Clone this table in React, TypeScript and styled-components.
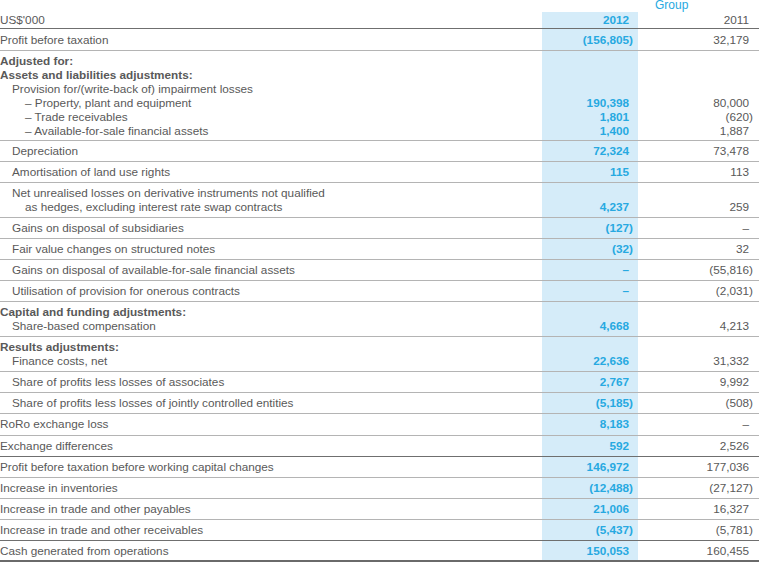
import React from "react";
import styled, { createGlobalStyle } from "styled-components";

const GlobalStyle = createGlobalStyle`
  html, body { margin: 0; padding: 0; background: #ffffff; }
  body { font-family: "Liberation Sans", Arial, sans-serif; }
`;

const COLS = "542px 96px 121px";
const BLUE = "#27a9e1";
const BLUE_BG = "#d5ecf9";
const TEXT = "#595959";

type Border = "none" | "dark" | "gray" | "thick";

const Sheet = styled.div`
  width: 759px;
  font-size: 11.75px;
  line-height: 14px;
  color: ${TEXT};
`;

const GroupRow = styled.div`
  display: grid;
  grid-template-columns: ${COLS};
  height: 12px;
`;

const GroupLabel = styled.div`
  grid-column: 3;
  padding-left: 17px;
  line-height: 11px;
  font-size: 12px;
  color: ${BLUE};
`;

const Row = styled.div<{ $border: Border; $pt: number; $pb: number }>`
  display: grid;
  grid-template-columns: ${COLS};
  border-bottom: ${(p) =>
    p.$border === "dark"
      ? "1px solid #6f6f6f"
      : p.$border === "thick"
      ? "2px solid #6a6a6a"
      : p.$border === "gray"
      ? "1px solid #b4b4b4"
      : "none"};
  & > * {
    padding-top: ${(p) => p.$pt}px;
    padding-bottom: ${(p) => p.$pb}px;
  }
`;

const LabelCell = styled.div`
  display: flex;
  flex-direction: column;
`;

const LabelLine = styled.div<{ $level: number; $bold?: boolean }>`
  padding-left: ${(p) => (p.$level === 2 ? 25 : p.$level === 1 ? 12 : 0)}px;
  font-weight: ${(p) => (p.$bold ? 700 : 400)};
  white-space: nowrap;
`;

const ValueCell = styled.div<{ $current?: boolean }>`
  display: flex;
  flex-direction: column;
  justify-content: flex-end;
  align-items: flex-end;
  background: ${(p) => (p.$current ? BLUE_BG : "transparent")};
  color: ${(p) => (p.$current ? BLUE : TEXT)};
  font-weight: ${(p) => (p.$current ? 700 : 400)};
  padding-right: ${(p) => (p.$current ? 5 : 6)}px;
`;

const Amount = styled.div`
  white-space: nowrap;
`;

const Paren = styled.span<{ $hidden: boolean }>`
  visibility: ${(p) => (p.$hidden ? "hidden" : "visible")};
`;

type Line = { t: string; l?: number; b?: boolean };
type RowData = {
  lines: Line[];
  v12: string[];
  v11: string[];
  border?: Border;
  pt?: number;
  pb?: number;
};

const rows: RowData[] = [
  { lines: [{ t: "Profit before taxation" }], v12: ["(156,805)"], v11: ["32,179"], pt: 4, pb: 3 },
  {
    lines: [
      { t: "Adjusted for:", b: true },
      { t: "Assets and liabilities adjustments:", b: true },
      { t: "Provision for/(write-back of) impairment losses", l: 1 },
      { t: "– Property, plant and equipment", l: 2 },
      { t: "– Trade receivables", l: 2 },
      { t: "– Available-for-sale financial assets", l: 2 },
    ],
    v12: ["190,398", "1,801", "1,400"],
    v11: ["80,000", "(620)", "1,887"],
    pt: 3,
    pb: 2,
  },
  { lines: [{ t: "Depreciation", l: 1 }], v12: ["72,324"], v11: ["73,478"] },
  { lines: [{ t: "Amortisation of land use rights", l: 1 }], v12: ["115"], v11: ["113"] },
  {
    lines: [
      { t: "Net unrealised losses on derivative instruments not qualified", l: 1 },
      { t: "as hedges, excluding interest rate swap contracts", l: 2 },
    ],
    v12: ["4,237"],
    v11: ["259"],
  },
  { lines: [{ t: "Gains on disposal of subsidiaries", l: 1 }], v12: ["(127)"], v11: ["–"] },
  { lines: [{ t: "Fair value changes on structured notes", l: 1 }], v12: ["(32)"], v11: ["32"] },
  {
    lines: [{ t: "Gains on disposal of available-for-sale financial assets", l: 1 }],
    v12: ["–"],
    v11: ["(55,816)"],
  },
  { lines: [{ t: "Utilisation of provision for onerous contracts", l: 1 }], v12: ["–"], v11: ["(2,031)"] },
  {
    lines: [
      { t: "Capital and funding adjustments:", b: true },
      { t: "Share-based compensation", l: 1 },
    ],
    v12: ["4,668"],
    v11: ["4,213"],
  },
  {
    lines: [
      { t: "Results adjustments:", b: true },
      { t: "Finance costs, net", l: 1 },
    ],
    v12: ["22,636"],
    v11: ["31,332"],
  },
  { lines: [{ t: "Share of profits less losses of associates", l: 1 }], v12: ["2,767"], v11: ["9,992"] },
  {
    lines: [{ t: "Share of profits less losses of jointly controlled entities", l: 1 }],
    v12: ["(5,185)"],
    v11: ["(508)"],
  },
  { lines: [{ t: "RoRo exchange loss" }], v12: ["8,183"], v11: ["–"], pb: 4 },
  { lines: [{ t: "Exchange differences" }], v12: ["592"], v11: ["2,526"], border: "dark" },
  {
    lines: [{ t: "Profit before taxation before working capital changes" }],
    v12: ["146,972"],
    v11: ["177,036"],
  },
  { lines: [{ t: "Increase in inventories" }], v12: ["(12,488)"], v11: ["(27,127)"] },
  { lines: [{ t: "Increase in trade and other payables" }], v12: ["21,006"], v11: ["16,327"] },
  {
    lines: [{ t: "Increase in trade and other receivables" }],
    v12: ["(5,437)"],
    v11: ["(5,781)"],
    border: "dark",
  },
  {
    lines: [{ t: "Cash generated from operations" }],
    v12: ["150,053"],
    v11: ["160,455"],
    border: "thick",
    pb: 2,
  },
];

function Figure({ value }: { value: string }) {
  const neg = value.endsWith(")");
  const main = neg ? value.slice(0, -1) : value;
  return (
    <Amount>
      {main}
      <Paren $hidden={!neg}>)</Paren>
    </Amount>
  );
}

export default function App() {
  return (
    <>
      <GlobalStyle />
      <Sheet>
        <GroupRow>
          <GroupLabel>Group</GroupLabel>
        </GroupRow>
        <Row $border="dark" $pt={1} $pb={1}>
          <LabelCell>
            <LabelLine $level={0}>US$'000</LabelLine>
          </LabelCell>
          <ValueCell $current>
            <Figure value="2012" />
          </ValueCell>
          <ValueCell>
            <Figure value="2011" />
          </ValueCell>
        </Row>
        {rows.map((r, i) => (
          <Row key={i} $border={r.border ?? "gray"} $pt={r.pt ?? 3} $pb={r.pb ?? 3}>
            <LabelCell>
              {r.lines.map((ln, j) => (
                <LabelLine key={j} $level={ln.l ?? 0} $bold={ln.b}>
                  {ln.t}
                </LabelLine>
              ))}
            </LabelCell>
            <ValueCell $current>
              {r.v12.map((v, j) => (
                <Figure key={j} value={v} />
              ))}
            </ValueCell>
            <ValueCell>
              {r.v11.map((v, j) => (
                <Figure key={j} value={v} />
              ))}
            </ValueCell>
          </Row>
        ))}
      </Sheet>
    </>
  );
}
